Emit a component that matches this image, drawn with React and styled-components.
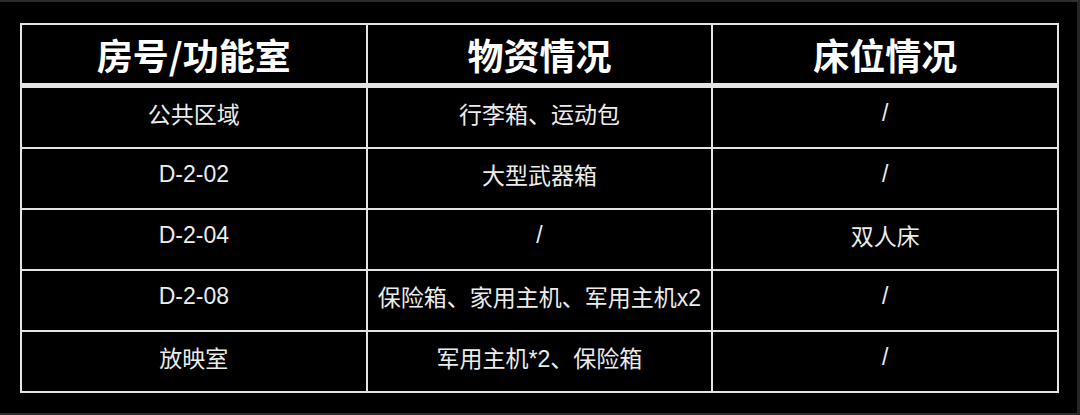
import React from "react";
import styled, { createGlobalStyle } from "styled-components";

const GlobalStyle = createGlobalStyle`
  html, body {
    margin: 0;
    padding: 0;
    background: #000;
  }
  body {
    font-family: "Liberation Sans", "Noto Sans CJK SC", sans-serif;
  }
`;

const Page = styled.div`
  box-sizing: border-box;
  width: 1080px;
  height: 415px;
  background: #000;
  border-top: 2px solid #2e2e2e;
  border-right: 3px solid #262626;
  border-bottom: 2px solid #2e2e2e;
  padding: 21px 18px 0 20px;
`;

const Grid = styled.div`
  display: grid;
  grid-template-columns: repeat(3, 1fr);
  grid-template-rows: 61px repeat(5, 59px);
  gap: 2px;
  padding: 2px;
  width: 1039px;
  box-sizing: border-box;
  background: #e4e4e4;
`;

const Cell = styled.div`
  background: #000;
  display: flex;
  align-items: center;
  justify-content: center;
  color: ${(p) => (p.$head ? "#ffffff" : "#ececec")};
  font-family: "Liberation Sans", "Noto Sans CJK SC", sans-serif;
  font-size: ${(p) => (p.$head ? "36px" : "23px")};
  font-weight: ${(p) => (p.$head ? 700 : 400)};
  margin-bottom: ${(p) => (p.$head ? "3px" : "0")};
  padding-bottom: ${(p) => (p.$head ? "0" : "9px")};
  box-sizing: border-box;
  white-space: nowrap;
`;

const HeadText = styled.span`
  font-family: "Noto Sans CJK SC", sans-serif;
  font-weight: 700;
`;

const headers = ["房号/功能室", "物资情况", "床位情况"];
const rows = [
  ["公共区域", "行李箱、运动包", "/"],
  ["D-2-02", "大型武器箱", "/"],
  ["D-2-04", "/", "双人床"],
  ["D-2-08", "保险箱、家用主机、军用主机x2", "/"],
  ["放映室", "军用主机*2、保险箱", "/"],
];

export default function App() {
  return (
    <>
      <GlobalStyle />
      <Page>
        <Grid>
          {headers.map((h) => (
            <Cell key={h} $head>
              <HeadText>{h}</HeadText>
            </Cell>
          ))}
          {rows.map((r, i) =>
            r.map((c, j) => <Cell key={`${i}-${j}`}>{c}</Cell>)
          )}
        </Grid>
      </Page>
    </>
  );
}
